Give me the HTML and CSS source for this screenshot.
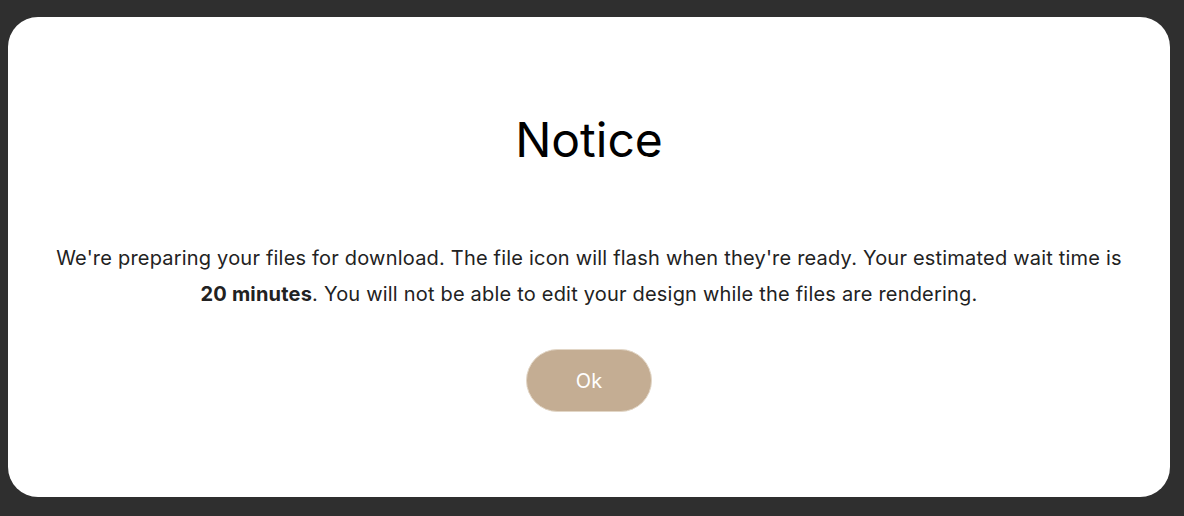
FILE: index.html
```html
<!DOCTYPE html>
<html>
<head>
<meta charset="utf-8">
<link rel="stylesheet" href="styles.css">
</head>
<body>
<div class="overlay">
  <div class="modal">
    <h1 class="title">Notice</h1>
    <p class="message">We're preparing your files for download. The file icon will flash when they're ready. Your estimated wait time is <strong>20 minutes</strong>. You will not be able to edit your design while the files are rendering.</p>
    <button class="ok-btn">Ok</button>
  </div>
</div>
</body>
</html>
```
FILE: styles.css
```css
html, body {
  margin: 0;
  padding: 0;
  height: 100%;
}
body {
  background: #2f2f2f;
  font-family: "Inter", "Noto Sans", sans-serif;
}
.overlay {
  box-sizing: border-box;
  height: 516px;
  padding: 17px 14px 19px 8px;
  display: flex;
}
.modal {
  flex: 1;
  background: #ffffff;
  border-radius: 30px;
  display: flex;
  flex-direction: column;
  align-items: center;
  padding: 94px 40px 0;
  box-sizing: border-box;
}
.title {
  margin: 0;
  font-size: 48px;
  font-weight: 400;
  line-height: 58px;
  color: #000;
}
.message {
  margin: 71px 0 0;
  max-width: 1078px;
  font-size: 20px;
  line-height: 36px;
  letter-spacing: 0.2px;
  color: #222;
  text-align: center;
}
.message strong {
  font-weight: 700;
}
.ok-btn {
  margin-top: 37px;
  width: 126px;
  height: 63px;
  border-radius: 32px;
  background: #c4ad93;
  border: 1px solid #e2d6c6;
  color: #fff;
  font-family: inherit;
  font-size: 20px;
  cursor: pointer;
}
```
